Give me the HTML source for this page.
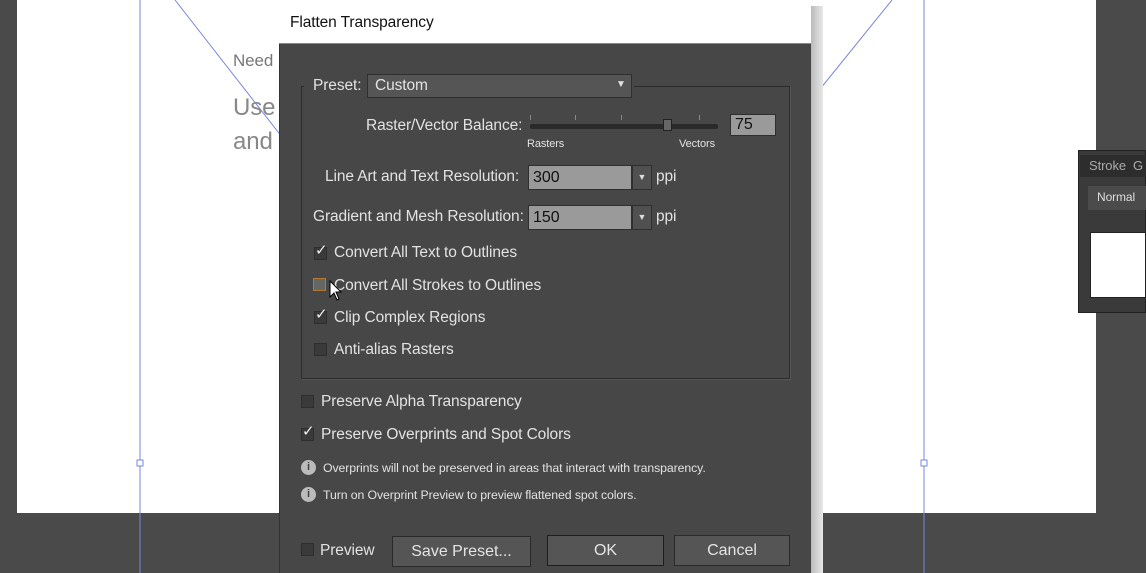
<!DOCTYPE html>
<html><head><style>
*{margin:0;padding:0;box-sizing:border-box}
body{width:1146px;height:573px;background:#4a4a4a;position:relative;overflow:hidden;font-family:"Liberation Sans",sans-serif}
.a{position:absolute}
.t{position:absolute;color:#e2e2e2;font-size:15.5px;white-space:nowrap;letter-spacing:-0.1px}
.cb{position:absolute;width:13px;height:13px;background:#3a3a3a;border:1px solid #2e2e2e}
.ck{position:absolute;color:#eee;font-size:15px;line-height:14px}
.btn{position:absolute;height:31px;background:#555;border:1px solid #2a2a2a;color:#e4e4e4;font-size:16px;text-align:center;line-height:29px}
.dd{position:absolute;height:25px;background:#9a9a9a;border:1px solid #2f2f2f;color:#111;font-size:16px;line-height:23px;padding-left:4px}
.dda{position:absolute;width:20px;height:25px;background:#505050;border:1px solid #2f2f2f;color:#ddd;font-size:9px;text-align:center;line-height:23px}
</style></head><body>
<div class="a" style="left:17px;top:0;width:1079px;height:513px;background:#fff"></div>
<svg class="a" style="left:0;top:0" width="1146" height="573">
<line x1="140" y1="0" x2="140" y2="573" stroke="#7a86e0" stroke-width="1"/>
<line x1="924" y1="0" x2="924" y2="573" stroke="#7a86e0" stroke-width="1"/>
<line x1="175" y1="0" x2="282" y2="137" stroke="#7a86e0" stroke-width="1"/>
<line x1="892" y1="0" x2="808" y2="104" stroke="#7a86e0" stroke-width="1"/>
<rect x="137" y="460" width="6" height="6" fill="#fff" stroke="#7a86e0"/>
<rect x="921" y="460" width="6" height="6" fill="#fff" stroke="#7a86e0"/>
</svg>
<div class="t" style="left:233px;top:51px;color:#777;font-size:17px">Need</div>
<div class="t" style="left:233px;top:94px;color:#888;font-size:24px">Use</div>
<div class="t" style="left:233px;top:128px;color:#888;font-size:24px">and</div>
<div class="a" style="left:1078px;top:150px;width:68px;height:163px;background:#3a3a3a;border:1px solid #222"></div>
<div class="a" style="left:1080px;top:155px;width:66px;height:22px;background:#2d2d2d"></div>
<div class="t" style="left:1089px;top:158px;color:#aaa;font-size:13px">Stroke&nbsp;&nbsp;G</div>
<div class="a" style="left:1088px;top:186px;width:58px;height:24px;background:#4b4b4b"></div>
<div class="t" style="left:1097px;top:190px;color:#ddd;font-size:12px">Normal</div>
<div class="a" style="left:1090px;top:232px;width:56px;height:66px;background:#fff;border:1px solid #222"></div>
<div class="a" style="left:811px;top:6px;width:12px;height:567px;background:linear-gradient(90deg,#bbb,#e8e8e8)"></div>
<div class="a" style="left:279px;top:4px;width:532px;height:569px;background:#474747;border-left:1px solid #333"></div>
<div class="a" style="left:279px;top:4px;width:532px;height:40px;background:#fff;border-bottom:1px solid #888"></div>
<div class="t" style="left:290px;top:14px;color:#111;font-size:15.5px">Flatten Transparency</div>
<div class="a" style="left:301px;top:86px;width:489px;height:293px;border:1px solid #2c2c2c;box-shadow:1px 1px 0 #555"></div>
<div class="a" style="left:304px;top:72px;width:330px;height:28px;background:#474747"></div>
<div class="t" style="left:313px;top:77px">Preset:</div>
<div class="a" style="left:367px;top:74px;width:265px;height:24px;background:#555;border:1px solid #2f2f2f"></div>
<div class="t" style="left:375px;top:77px">Custom</div>
<div class="t" style="left:616px;top:79px;font-size:10px">▼</div>
<div class="t" style="left:366px;top:117px">Raster/Vector Balance:</div>
<div class="a" style="left:530px;top:124px;width:188px;height:5px;background:#2a2a2a;border-radius:2px"></div>
<div class="a" style="left:663px;top:119px;width:9px;height:12px;background:#666;border:1px solid #222"></div>
<div class="a" style="left:530px;top:115px;width:1px;height:5px;background:#888"></div>
<div class="a" style="left:575px;top:115px;width:1px;height:5px;background:#888"></div>
<div class="a" style="left:621px;top:115px;width:1px;height:5px;background:#888"></div>
<div class="a" style="left:699px;top:115px;width:1px;height:5px;background:#888"></div>
<div class="t" style="left:527px;top:138px;font-size:11px">Rasters</div>
<div class="t" style="left:679px;top:138px;font-size:11px">Vectors</div>
<div class="a" style="left:730px;top:114px;width:46px;height:22px;background:#9a9a9a;border:1px solid #2f2f2f;font-size:16px;color:#111;padding-left:4px;line-height:20px">75</div>
<div class="t" style="left:325px;top:168px">Line Art and Text Resolution:</div>
<div class="dd" style="left:528px;top:165px;width:104px">300</div>
<div class="dda" style="left:632px;top:165px">▼</div>
<div class="t" style="left:656px;top:168px">ppi</div>
<div class="t" style="left:313px;top:208px">Gradient and Mesh Resolution:</div>
<div class="dd" style="left:528px;top:205px;width:104px">150</div>
<div class="dda" style="left:632px;top:205px">▼</div>
<div class="t" style="left:656px;top:208px">ppi</div>
<div class="cb" style="left:314px;top:247px"></div><div class="ck" style="left:315px;top:244px">✓</div>
<div class="t" style="left:334px;top:244px">Convert All Text to Outlines</div>
<div class="cb" style="left:313px;top:278px;border:1px solid #b07a30;background:#666"></div>
<div class="t" style="left:334px;top:277px">Convert All Strokes to Outlines</div>
<svg class="a" style="left:329px;top:280px" width="14" height="22"><path d="M1 1 L1 17 L5 13 L8 20 L10 19 L7 12 L12 12 Z" fill="#fff" stroke="#000"/></svg>
<div class="cb" style="left:314px;top:311px"></div><div class="ck" style="left:315px;top:308px">✓</div>
<div class="t" style="left:334px;top:309px">Clip Complex Regions</div>
<div class="cb" style="left:314px;top:343px"></div>
<div class="t" style="left:334px;top:341px">Anti-alias Rasters</div>
<div class="cb" style="left:301px;top:395px"></div>
<div class="t" style="left:321px;top:393px">Preserve Alpha Transparency</div>
<div class="cb" style="left:301px;top:428px"></div><div class="ck" style="left:302px;top:425px">✓</div>
<div class="t" style="left:321px;top:426px">Preserve Overprints and Spot Colors</div>
<div class="a" style="left:301px;top:460px;width:15px;height:15px;border-radius:50%;background:#bbb;color:#444;font-size:11px;text-align:center;line-height:15px;font-weight:bold">i</div>
<div class="t" style="left:323px;top:461px;font-size:12.3px">Overprints will not be preserved in areas that interact with transparency.</div>
<div class="a" style="left:301px;top:487px;width:15px;height:15px;border-radius:50%;background:#bbb;color:#444;font-size:11px;text-align:center;line-height:15px;font-weight:bold">i</div>
<div class="t" style="left:323px;top:488px;font-size:12.3px">Turn on Overprint Preview to preview flattened spot colors.</div>
<div class="cb" style="left:301px;top:543px"></div>
<div class="t" style="left:320px;top:542px">Preview</div>
<div class="btn" style="left:392px;top:536px;width:139px">Save Preset...</div>
<div class="btn" style="left:547px;top:535px;width:117px;border-color:#1e1e1e">OK</div>
<div class="btn" style="left:674px;top:535px;width:116px">Cancel</div>
</body></html>
